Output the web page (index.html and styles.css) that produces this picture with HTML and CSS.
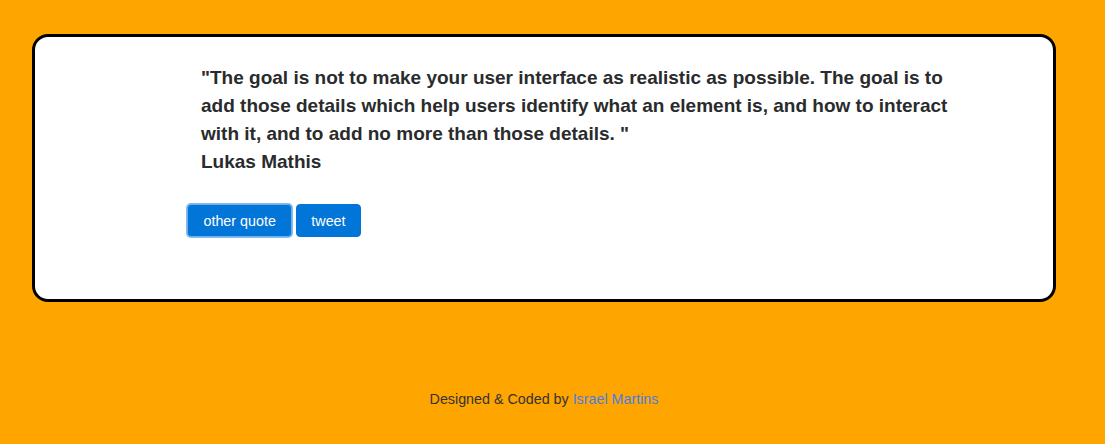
FILE: index.html
```html
<!DOCTYPE html>
<html>
<head>
<meta charset="utf-8">
<link rel="stylesheet" href="styles.css">
</head>
<body>
<div class="page">
  <div class="card">
    <div class="quote">
      <p class="text">"The goal is not to make your user interface as realistic as possible. The goal is to add those details which help users identify what an element is, and how to interact with it, and to add no more than those details. "</p>
      <p class="author">Lukas Mathis</p>
    </div>
    <div class="actions">
      <button class="btn btn-focus">other quote</button>
      <button class="btn">tweet</button>
    </div>
  </div>
  <footer class="footer">Designed &amp; Coded by <a href="#" class="link">Israel Martins</a></footer>
</div>
</body>
</html>
```
FILE: styles.css
```css
html, body {
  margin: 0;
  padding: 0;
  background: #ffa500;
  font-family: "Liberation Sans", Arial, sans-serif;
}
.page {
  width: 1024px;
  margin-left: 32px;
  padding-top: 34px;
}
.card {
  box-sizing: border-box;
  height: 268px;
  background: #fff;
  border: 3px solid #000;
  border-radius: 16px;
  padding: 27px 0 0 152px;
  display: flex;
  flex-direction: column;
}
.quote {
  padding-left: 14px;
  width: 760px;
  color: #292b2c;
  font-size: 19px;
  font-weight: bold;
  line-height: 28px;
}
.quote p {
  margin: 0;
}
.actions {
  margin-top: 28px;
  display: flex;
  gap: 4px;
}
.btn {
  font-family: "Liberation Sans", Arial, sans-serif;
  font-size: 14.3px;
  line-height: 17px;
  padding: 8px 14px;
  height: 33px;
  background: #0275d8;
  color: #fff;
  border: 1px solid #0275d8;
  border-radius: 4px;
}
.btn-focus {
  padding: 8px 15.5px;
  box-shadow: 0 0 0 2px rgba(2, 117, 216, 0.45) inset, 0 0 0 1px rgba(120, 180, 240, 0.9);
  border-color: #6fb0ee;
}
.footer {
  margin-top: 89px;
  text-align: center;
  font-size: 14.3px;
  color: #333;
}
.link {
  color: #4a7de0;
  text-decoration: none;
}
```
